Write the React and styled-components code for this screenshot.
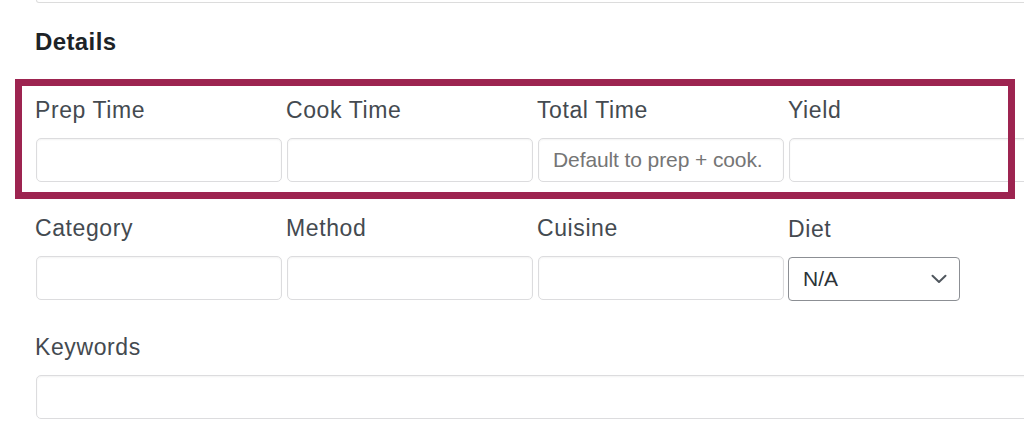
import React from "react";
import styled, { createGlobalStyle } from "styled-components";

const Global = createGlobalStyle`
  html, body { margin: 0; padding: 0; background: #ffffff; overflow: hidden; }
  body { font-family: "Liberation Sans", Arial, Helvetica, sans-serif; }
  * { box-sizing: border-box; }
`;

const Frame = styled.div`
  width: 1024px;
  overflow: hidden;
`;

const Page = styled.div`
  width: 1120px;
  padding: 0 0 0 35px;
`;

const TopField = styled.div`
  height: 3px;
  margin-left: 1px;
  border: 1px solid #dcdcdc;
  border-top: none;
  border-radius: 0 0 4px 4px;
`;

const Heading = styled.h2`
  margin: 24px 0 0 0;
  font-size: 24px;
  line-height: 30px;
  font-weight: 700;
  letter-spacing: 0.4px;
  color: #1d2327;
`;

const Rows = styled.div`
  margin-top: 39px;
  display: flex;
  flex-direction: column;
  gap: 32px;
`;

const RowWrap = styled.div`
  position: relative;
`;

const Highlight = styled.div`
  position: absolute;
  top: -17px;
  bottom: -17px;
  left: -20px;
  width: 1000px;
  border: 7px solid #9d2450;
  pointer-events: none;
`;

const Grid = styled.div`
  display: grid;
  grid-template-columns: repeat(4, 247px);
  column-gap: 4px;
`;

const Field = styled.div`
  display: flex;
  flex-direction: column;
  gap: 14px;
  width: ${(p) => (p.$wide ? "1040px" : "auto")};
`;

const Label = styled.label`
  display: block;
  font-size: 23px;
  line-height: 28px;
  letter-spacing: 0.6px;
  color: #444a50;
  padding-top: ${(p) => (p.$nudge ? "1px" : "0")};
  margin-bottom: ${(p) => (p.$nudge ? "-1px" : "0")};
`;

const Input = styled.input`
  width: calc(100% - 1px);
  margin: 0 0 0 1px;
  height: 44px;
  border: 1px solid #dcdcde;
  border-radius: 5px;
  box-shadow: inset 0 1px 2px rgba(0, 0, 0, 0.05);
  background: #fff;
  padding: 0 14px;
  font-family: "Liberation Sans", Arial, Helvetica, sans-serif;
  font-size: 21px;
  letter-spacing: -0.1px;
  color: #2c3338;
  outline: none;
  &::placeholder {
    color: #757575;
  }
`;

const SelectBox = styled.div`
  width: 172px;
  height: 44px;
  margin-top: 1px;
  border: 1px solid #8c8f94;
  border-radius: 4px;
  background: #fff;
  display: flex;
  align-items: center;
  justify-content: space-between;
  padding: 0 12px 0 14px;
  font-size: 21px;
  color: #2c3338;
`;

const Chevron = () => (
  <svg width="16" height="10" viewBox="0 0 16 10" fill="none">
    <path d="M1.5 1.8 L8 8 L14.5 1.8" stroke="#50575e" strokeWidth="2" strokeLinecap="round" strokeLinejoin="round" />
  </svg>
);

const TextField = ({ label, placeholder }) => (
  <Field>
    <Label>{label}</Label>
    <Input type="text" placeholder={placeholder} />
  </Field>
);

export default function App() {
  return (
    <>
      <Global />
      <Frame>
        <Page>
          <TopField />
          <Heading>Details</Heading>
          <Rows>
            <RowWrap>
              <Grid>
                <TextField label="Prep Time" />
                <TextField label="Cook Time" />
                <TextField label="Total Time" placeholder="Default to prep + cook." />
                <TextField label="Yield" />
              </Grid>
              <Highlight />
            </RowWrap>
            <Grid>
              <TextField label="Category" />
              <TextField label="Method" />
              <TextField label="Cuisine" />
              <Field>
                <Label $nudge>Diet</Label>
                <SelectBox>
                  <span>N/A</span>
                  <Chevron />
                </SelectBox>
              </Field>
            </Grid>
            <Field $wide>
              <Label>Keywords</Label>
              <Input type="text" />
            </Field>
          </Rows>
        </Page>
      </Frame>
    </>
  );
}
